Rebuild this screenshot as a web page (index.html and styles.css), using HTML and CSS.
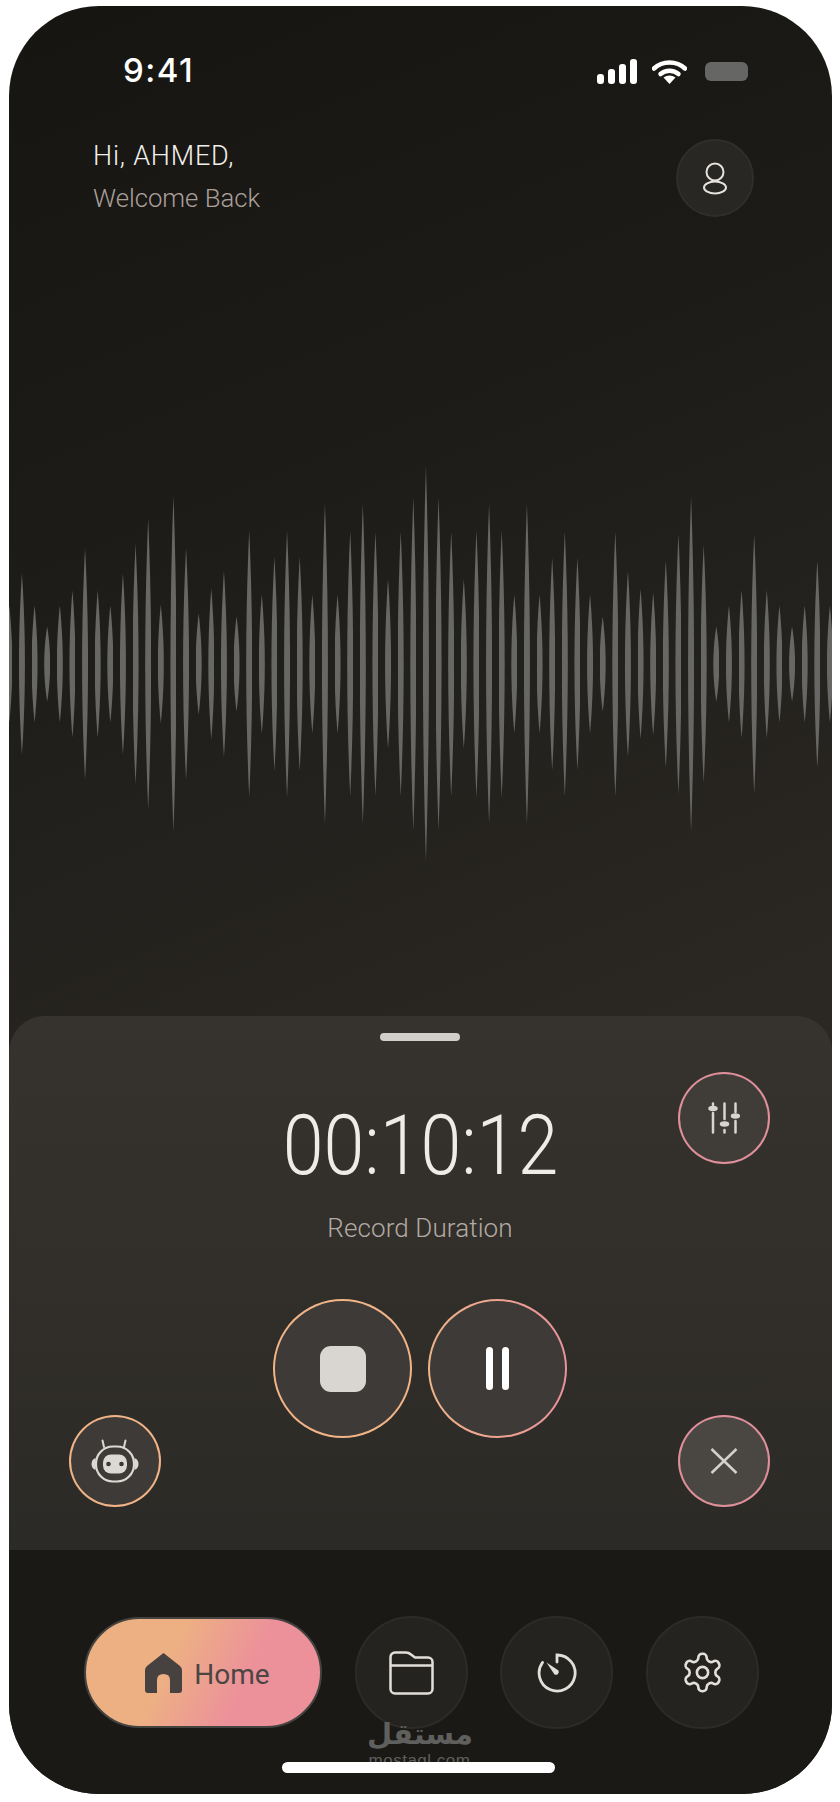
FILE: index.html
```html
<!DOCTYPE html>
<html>
<head>
	<meta charset="utf-8">
	<title>Voice Recorder</title>
	<link rel="stylesheet" href="styles.css">
</head>
<body>
	<div class="phone">
		<div class="status">
			<span class="clock">9:41</span>
			<div class="status-icons">
				<div class="signal">
					<i class="sig1"></i><i class="sig2"></i><i class="sig3"></i><i class="sig4"></i>
				</div>
				<svg class="wifi" width="35" height="25" viewBox="0 0 35 25">
					<path d="M2 9.5C10.500 1.500 24.500 1.500 33 9.500" fill="none" stroke="#fff" stroke-width="4.500" stroke-linecap="round"/>
					<path d="M8.500 15C13.500 10.500 21.500 10.500 26.500 15" fill="none" stroke="#fff" stroke-width="4.500" stroke-linecap="round"/>
					<path d="M17.500 25L11.500 18.500C15 15.800 20 15.800 23.500 18.500Z" fill="#fff"/>
				</svg>
				<div class="battery"></div>
			</div>
		</div>

		<header class="top">
			<div class="greeting">
				<div class="hi">Hi, AHMED,</div>
				<div class="welcome">Welcome Back</div>
			</div>
			<button class="profile">
				<svg width="28" height="34" viewBox="0 0 28 34" fill="none" stroke="#e6e2dd" stroke-width="2">
					<circle cx="14" cy="11" r="8.500"/>
					<ellipse cx="14" cy="26.500" rx="11" ry="6"/>
				</svg>
			</button>
		</header>

		<section class="wave">
			<i class="bar" style="height:117px"></i><i class="bar" style="height:181px"></i><i class="bar" style="height:117px"></i><i class="bar" style="height:75px"></i><i class="bar" style="height:117px"></i><i class="bar" style="height:147px"></i><i class="bar" style="height:232px"></i><i class="bar" style="height:147px"></i><i class="bar" style="height:117px"></i><i class="bar" style="height:181px"></i><i class="bar" style="height:240px"></i>
			<i class="bar" style="height:291px"></i><i class="bar" style="height:119px"></i><i class="bar" style="height:336px"></i><i class="bar" style="height:232px"></i><i class="bar" style="height:101px"></i><i class="bar" style="height:151px"></i><i class="bar" style="height:186px"></i><i class="bar" style="height:95px"></i><i class="bar" style="height:267px"></i><i class="bar" style="height:139px"></i><i class="bar" style="height:214px"></i>
			<i class="bar" style="height:267px"></i><i class="bar" style="height:214px"></i><i class="bar" style="height:139px"></i><i class="bar" style="height:320px"></i><i class="bar" style="height:139px"></i><i class="bar" style="height:266px"></i><i class="bar" style="height:320px"></i><i class="bar" style="height:264px"></i><i class="bar" style="height:170px"></i><i class="bar" style="height:265px"></i><i class="bar" style="height:333px"></i>
			<i class="bar" style="height:395px"></i><i class="bar" style="height:333px"></i><i class="bar" style="height:265px"></i><i class="bar" style="height:170px"></i><i class="bar" style="height:267px"></i><i class="bar" style="height:320px"></i><i class="bar" style="height:267px"></i><i class="bar" style="height:139px"></i><i class="bar" style="height:320px"></i><i class="bar" style="height:139px"></i><i class="bar" style="height:213px"></i>
			<i class="bar" style="height:265px"></i><i class="bar" style="height:212px"></i><i class="bar" style="height:139px"></i><i class="bar" style="height:95px"></i><i class="bar" style="height:265px"></i><i class="bar" style="height:186px"></i><i class="bar" style="height:150px"></i><i class="bar" style="height:143px"></i><i class="bar" style="height:207px"></i><i class="bar" style="height:260px"></i><i class="bar" style="height:335px"></i>
			<i class="bar" style="height:238px"></i><i class="bar" style="height:75px"></i><i class="bar" style="height:117px"></i><i class="bar" style="height:148px"></i><i class="bar" style="height:259px"></i><i class="bar" style="height:148px"></i><i class="bar" style="height:117px"></i><i class="bar" style="height:75px"></i><i class="bar" style="height:117px"></i><i class="bar" style="height:207px"></i><i class="bar" style="height:117px"></i>
		</section>

		<section class="sheet">
			<div class="sheet-left">
				<button class="round small orange robot">
					<svg width="48" height="44" viewBox="0 0 48 44">
						<path d="M13 8L11.500 1.500M33 8L34.500 1.500" fill="none" stroke="#dcd9d4" stroke-width="2" stroke-linecap="round"/>
						<path d="M4.500 19C1.500 20 0.500 22.500 0.500 25S1.500 30 4.500 31ZM43.500 19C46.500 20 47.500 22.500 47.500 25S46.500 30 43.500 31Z" fill="#dcd9d4"/>
						<rect x="5" y="7.500" width="38" height="35" rx="17" fill="none" stroke="#dcd9d4" stroke-width="2.200"/>
						<rect x="12" y="15.500" width="24" height="19" rx="8" fill="#dcd9d4"/>
						<circle cx="17.500" cy="25" r="2.300" fill="#3a3733"/>
						<circle cx="30.500" cy="25" r="2.300" fill="#3a3733"/>
					</svg>
				</button>
			</div>

			<div class="sheet-main">
				<div class="handle"></div>
				<div class="timer">00:10:12</div>
				<div class="timer-label">Record Duration</div>
				<div class="controls">
					<button class="round big orange"><span class="stop"></span></button>
					<button class="round big mixed"><span class="pause"><i></i><i></i></span></button>
				</div>
			</div>

			<div class="sheet-right">
				<button class="round small pink">
					<svg width="32" height="32" viewBox="0 0 32 32" fill="none" stroke="#d8d4cf" stroke-width="2.500" stroke-linecap="round">
						<path d="M5 1.500V3M5 11V30.500M16.500 1.500V17M16.500 28V30.500M27.500 1.500V10M27.500 19V30.500"/>
						<ellipse cx="5" cy="6.500" rx="3.500" ry="1.500" fill="#d8d4cf"/>
						<ellipse cx="16.500" cy="22" rx="3.500" ry="1.500" fill="#d8d4cf"/>
						<ellipse cx="27.500" cy="14" rx="3.500" ry="1.500" fill="#d8d4cf"/>
					</svg>
				</button>
				<button class="round small pink close">
					<svg width="28" height="26" viewBox="0 0 28 26" fill="none" stroke="#d4d0cb" stroke-width="2.500">
						<path d="M1.500 1L26.500 25M26.500 1L1.500 25"/>
					</svg>
				</button>
			</div>
		</section>

		<nav class="tabs">
			<div class="tab-row">
				<button class="home-tab">
					<svg width="37" height="40" viewBox="0 0 37 40">
						<path d="M18.500 0L35 13Q37 15 37 17V37Q37 40 34 40H25V27Q25 21 18.500 21Q12 21 12 27V40H3Q0 40 0 37V17Q0 15 2 13Z" fill="#47423f"/>
					</svg>
					<span>Home</span>
				</button>
				<button class="tab">
					<svg width="45" height="44" viewBox="0 0 45 44" fill="none" stroke="#e2dfda" stroke-width="2.500">
						<path d="M1.500 14V6A4.500 4.500 0 0 1 6 1.500H17C19 1.500 20.500 2.200 22 3.500L26 6.500H39A4.500 4.500 0 0 1 43.500 11V38A4.500 4.500 0 0 1 39 42.500H6A4.500 4.500 0 0 1 1.500 38Z"/>
						<path d="M1.500 14.500H43.500"/>
					</svg>
				</button>
				<button class="tab">
					<svg width="40" height="40" viewBox="0 0 40 40" fill="none" stroke="#e2dfda" stroke-width="2.800" stroke-linecap="round">
						<path d="M20 9V2A18 18 0 1 1 5.500 9.500"/>
						<path d="M9.500 9.500L21.500 17.500A3 3 0 0 1 17.500 21.500Z" fill="#e2dfda" stroke="none"/>
					</svg>
				</button>
				<button class="tab">
					<svg width="45" height="45" viewBox="0 0 24 24" fill="none" stroke="#e2dfda" stroke-width="1.400">
						<path d="M12.220 2h-.44a2 2 0 0 0-2 2v.18a2 2 0 0 1-1 1.730l-.43.250a2 2 0 0 1-2 0l-.15-.08a2 2 0 0 0-2.730.730l-.22.380a2 2 0 0 0 .73 2.730l.15.100a2 2 0 0 1 1 1.720v.510a2 2 0 0 1-1 1.740l-.15.090a2 2 0 0 0-.73 2.730l.22.380a2 2 0 0 0 2.730.730l.15-.08a2 2 0 0 1 2 0l.43.250a2 2 0 0 1 1 1.730V20a2 2 0 0 0 2 2h.44a2 2 0 0 0 2-2v-.18a2 2 0 0 1 1-1.730l.43-.25a2 2 0 0 1 2 0l.15.080a2 2 0 0 0 2.730-.73l.22-.39a2 2 0 0 0-.73-2.730l-.15-.08a2 2 0 0 1-1-1.740v-.5a2 2 0 0 1 1-1.740l.15-.09a2 2 0 0 0 .73-2.730l-.22-.38a2 2 0 0 0-2.730-.73l-.15.080a2 2 0 0 1-2 0l-.43-.25a2 2 0 0 1-1-1.730V4a2 2 0 0 0-2-2z"/>
						<circle cx="12" cy="12" r="3"/>
					</svg>
				</button>
			</div>
			<div class="home-bar"></div>
		</nav>

		<div class="watermark">
			<div class="wm-ar">مستقل</div>
			<div class="wm-en">mostaql.com</div>
		</div>
	</div>
</body>
</html>
```

FILE: styles.css
```css
* {
	box-sizing: border-box;
}
body {
	margin: 0;
	background-color: white;
	font-family: 'Roboto', sans-serif;
}
button {
	padding: 0;
	border: none;
	font: inherit;
	display: flex;
	align-items: center;
	justify-content: center;
}

.phone {
	position: relative;
	display: flex;
	flex-direction: column;
	width: 823px;
	height: 1788px;
	margin: 6px 0 0 9px;
	border-radius: 90px;
	overflow: hidden;
	background: linear-gradient(158deg, #161511 0%, #1b1a16 22%, #23211d 42%, #2b2824 62%);
}

/* status bar */
.status {
	display: flex;
	justify-content: space-between;
	align-items: center;
	height: 31px;
	margin-top: 50px;
	padding: 0 84px 0 114px;
}
.clock {
	margin-bottom: 4px;
	font-family: 'Inter', sans-serif;
	font-size: 33px;
	font-weight: 500;
	letter-spacing: 1.500px;
	color: white;
}
.status-icons {
	display: flex;
	align-items: center;
}
.signal {
	display: flex;
	align-items: flex-end;
	gap: 4px;
	height: 25px;
	margin-right: 15px;
}
.signal i {
	width: 7px;
	border-radius: 3px;
	background-color: white;
}
.sig1 { height: 10px; }
.sig2 { height: 15px; }
.sig3 { height: 20px; }
.sig4 { height: 25px; }
.wifi {
	margin-right: 18px;
}
.battery {
	width: 43px;
	height: 19px;
	border-radius: 6px;
	background-color: #666664;
}

/* greeting */
.top {
	display: flex;
	justify-content: space-between;
	align-items: flex-start;
	margin-top: 52px;
	padding: 0 78px 0 84px;
}
.greeting {
	margin-top: -4px;
	font-weight: 300;
	line-height: 42px;
}
.hi {
	font-size: 27px;
	letter-spacing: .8px;
	color: #f2efeb;
}
.welcome {
	font-size: 25.700px;
	color: #ab9f9a;
}
.profile {
	width: 78px;
	height: 78px;
	border-radius: 50%;
	background-color: #292724;
	border: 2px solid #302e2b;
}

/* waveform */
.wave {
	flex: 1;
	display: flex;
	align-items: center;
	gap: 6.630px;
	margin-left: -2.700px;
	padding-top: 93px;
}
.bar {
	flex: none;
	width: 6px;
	background-color: #676765;
	clip-path: polygon(50% 0, 59.500% 5%, 68% 10%, 82% 20%, 92% 30%, 98% 40%, 100% 50%, 98% 60%, 92% 70%, 82% 80%, 68% 90%, 59.500% 95%, 50% 100%, 40.500% 95%, 32% 90%, 18% 80%, 8% 70%, 2% 60%, 0 50%, 2% 40%, 8% 30%, 18% 20%, 32% 10%, 40.500% 5%);
}

/* recording sheet */
.sheet {
	display: grid;
	grid-template-columns: 93px 1fr 92px;
	height: 534px;
	padding: 0 62px 43px 60px;
	border-radius: 36px 36px 0 0;
	background: linear-gradient(180deg, #36332e 0%, #2c2a26 100%);
}
.sheet-left {
	display: flex;
	align-items: flex-end;
}
.sheet-right {
	display: flex;
	flex-direction: column;
	justify-content: space-between;
	align-items: flex-end;
	padding-top: 56px;
}
.sheet-main {
	display: flex;
	flex-direction: column;
	align-items: center;
}
.handle {
	width: 80px;
	height: 8px;
	margin-top: 17px;
	border-radius: 4px;
	background-color: #d2cfca;
}
.timer {
	margin-top: 65px;
	font-size: 84px;
	font-weight: 300;
	line-height: 80px;
	color: #efece8;
	transform: scaleX(.875);
}
.timer-label {
	margin-top: 27px;
	font-size: 26px;
	font-weight: 300;
	letter-spacing: .1px;
	line-height: 30px;
	color: #b3a9a4;
}
.controls {
	display: flex;
	gap: 16px;
	margin-top: 56px;
}

.round {
	border-radius: 50%;
	border: 2px solid transparent;
}
.big {
	width: 139px;
	height: 139px;
}
.small {
	width: 92px;
	height: 92px;
}
.orange {
	background: linear-gradient(#3e3a37, #3e3a37) padding-box, linear-gradient(#f0b487, #f0b487) border-box;
}
.pink {
	background: linear-gradient(#403d39, #403d39) padding-box, linear-gradient(#e0909a, #e0909a) border-box;
}
.mixed {
	background: linear-gradient(#3e3a37, #3e3a37) padding-box, linear-gradient(90deg, #f0b487, #e9929c) border-box;
}
.close {
	background: linear-gradient(#4a4743, #4a4743) padding-box, linear-gradient(#e0909a, #e0909a) border-box;
}
.stop {
	width: 46px;
	height: 46px;
	border-radius: 11px;
	background-color: #d9d6d1;
}
.pause {
	display: flex;
	gap: 9px;
}
.pause i {
	width: 7px;
	height: 43px;
	border-radius: 4px;
	background-color: white;
}

/* bottom tabs */
.tabs {
	flex: none;
	height: 244px;
	display: flex;
	flex-direction: column;
	padding: 66px 0 0 75px;
	background-color: #1a1916;
}
.tab-row {
	display: flex;
	align-items: center;
	gap: 32.500px;
}
.home-tab {
	gap: 12px;
	width: 238px;
	height: 111px;
	padding-left: 9px;
	border-radius: 56px;
	border: 2px solid #454340;
	background: linear-gradient(115deg, #edb083 36%, #ec919a 66%);
	background-origin: border-box;
	font-size: 28px;
	font-weight: 400;
	color: #4a4644;
}
.home-tab span {
	margin-top: 4px;
}
.tab {
	width: 113px;
	height: 113px;
	border-radius: 50%;
	background-color: #252320;
	border: 2px solid #2d2b28;
}
.home-bar {
	position: relative;
	z-index: 1;
	width: 273px;
	height: 11px;
	margin: 33px 0 0 198px;
	border-radius: 6px;
	background-color: white;
}

.watermark {
	position: absolute;
	left: 358px;
	top: 1710px;
	width: 105px;
	text-align: center;
	color: #5f5f5d;
}
.wm-ar {
	font-family: 'DejaVu Sans', sans-serif;
	font-size: 29px;
	font-weight: 700;
	line-height: 36px;
}
.wm-en {
	font-family: 'Liberation Sans', sans-serif;
	font-size: 17px;
	line-height: 18px;
	letter-spacing: .5px;
}
```
